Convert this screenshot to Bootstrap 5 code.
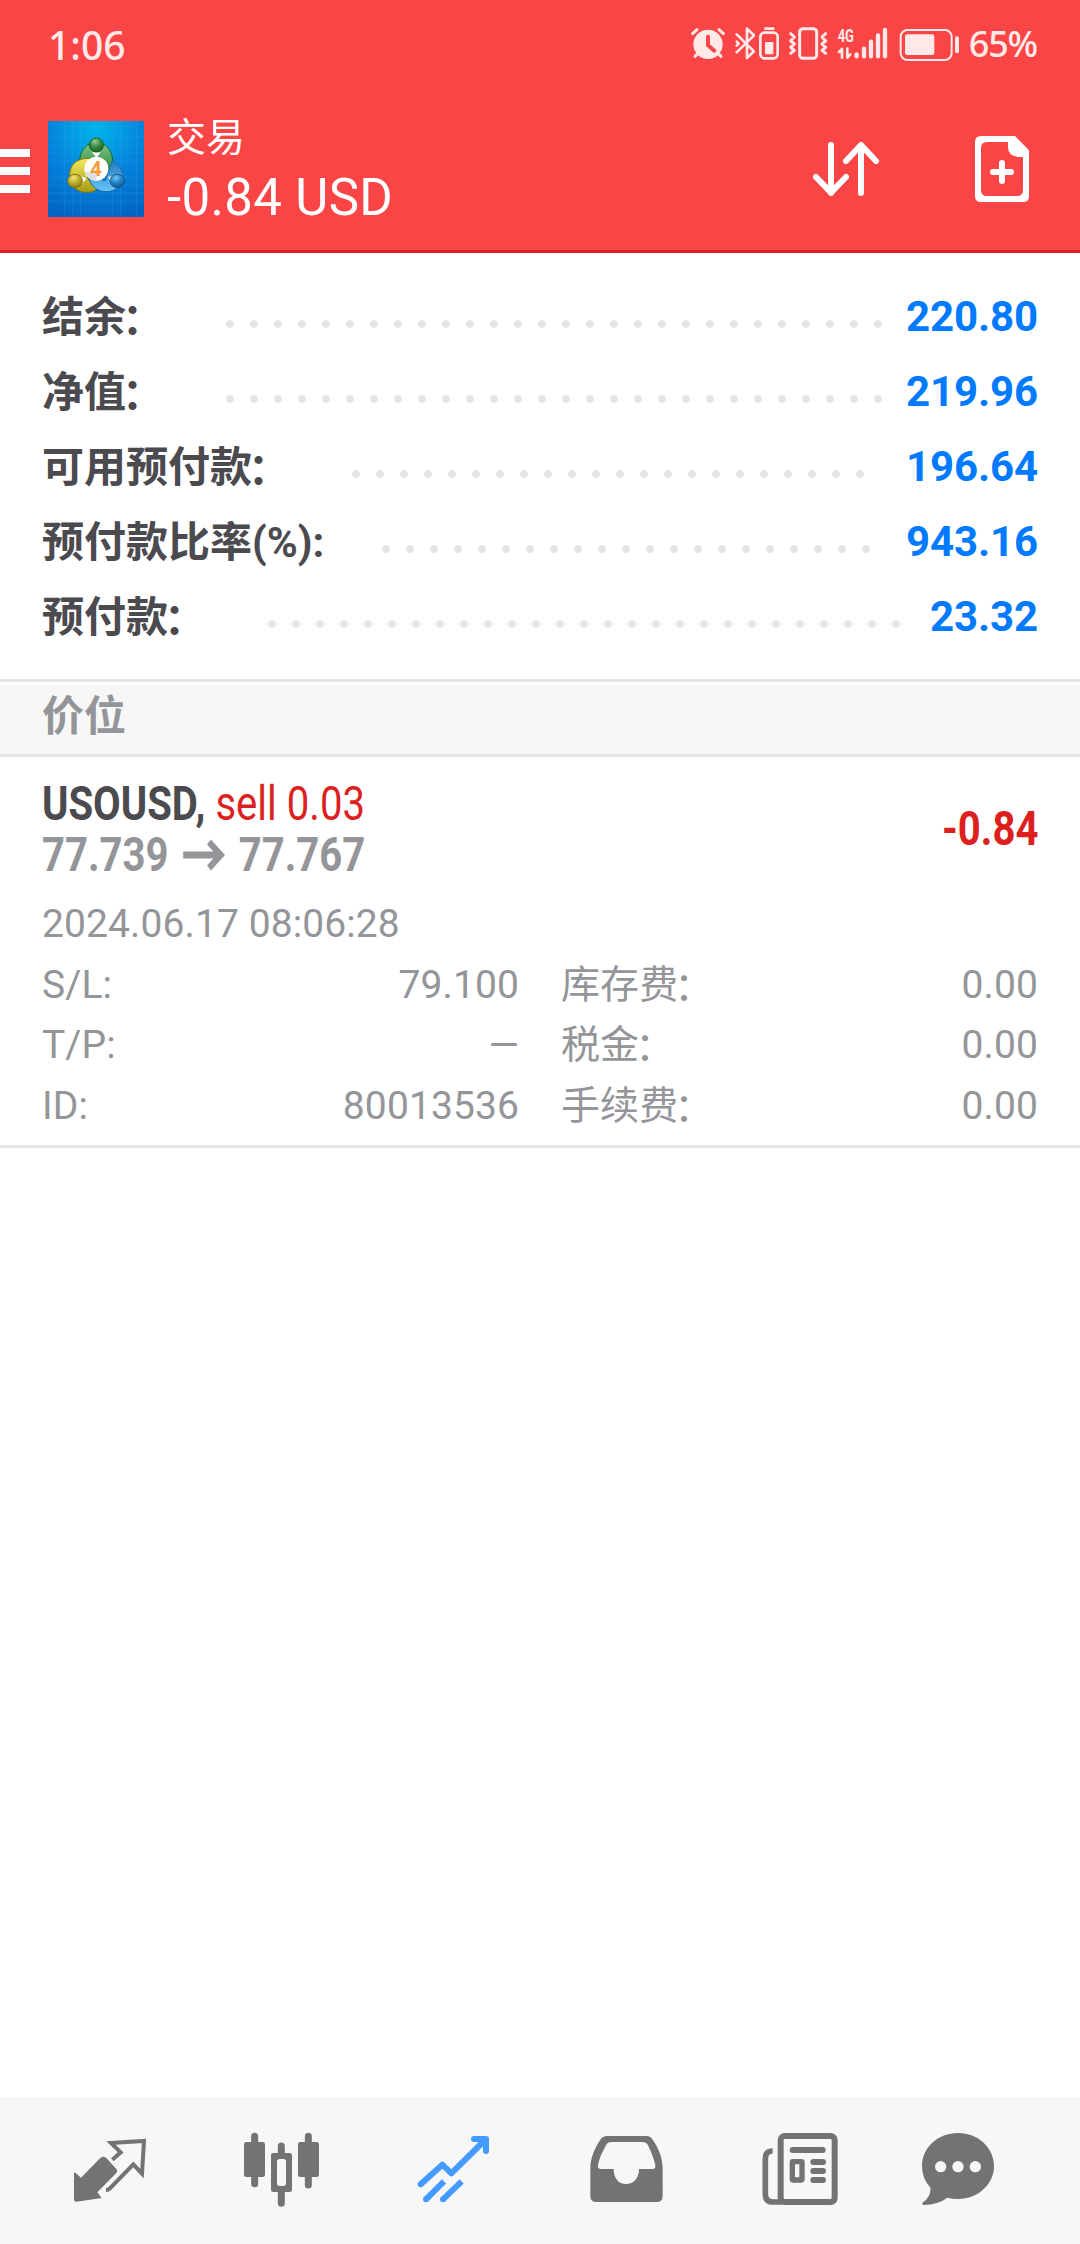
<!DOCTYPE html>
<html lang="zh-CN">
<head>
<meta charset="utf-8">
<meta name="viewport" content="width=device-width, initial-scale=1">
<title>交易</title>
<link rel="stylesheet" href="https://cdn.jsdelivr.net/npm/bootstrap@5.3.0/dist/css/bootstrap.min.css">
<style>
body{font-family:Roboto,"Noto Sans CJK SC",sans-serif;color:#4a4a4f;background:#fff;overflow:hidden}
svg{display:block;flex:none}
.screen{height:2244px}
.top-area{background:#f94545;border-bottom:3px solid #d32023;color:#fff}
.status-row{height:88px;padding:0 43px 0 48px;font-family:"Noto Sans",sans-serif;font-weight:500;color:#ffe9e9}
.clock{font-size:39px;line-height:1}
.percent{font-size:36px;line-height:1;letter-spacing:-1.2px}
.app-row{height:162px}
.menu-bars{display:grid;gap:10px;width:30px;margin:4px 18px 0 0}
.menu-bars span{display:block;height:8px;background:#fff}
.titles{margin-left:23px}
.app-title{font-size:39px;line-height:57px}
.app-sum{font-size:51px;line-height:61px;letter-spacing:.35px}
.actions{gap:90px;padding-right:48px}
.summary{padding:26px 42px 25px;border-bottom:3px solid #e5e5e5}
.sum-row{height:75px;font-size:42px;font-weight:700;line-height:75px}
.sum-row .lbl{margin-top:2px}
.sum-row .val{color:#007aff;letter-spacing:-.1px}
.colon{margin:0 4px 0 -4px;line-height:1;vertical-align:-2px}
.leader{height:8px;margin:15px 0 0 50px;width:calc(var(--n)*24px);background:radial-gradient(circle at center,#e5e5e5 3.6px,transparent 4.3px) 0 0/24px 8px repeat-x}
.section-title{margin-top:3px;height:72px;background:#f7f7f7;border-bottom:3px solid #e5e5e5;color:#949599;font-size:42px;font-weight:700;line-height:64px;padding-left:42px}
.position{padding:21px 42px 8px;border-bottom:3px solid #e5e5e5;color:#949599}
.narrow{font-size:48px;line-height:51px;white-space:nowrap;transform:scaleX(.835);transform-origin:0 50%}
.narrow-end{transform-origin:100% 50%;margin-top:-2px}
.price-arrow{margin:0 16px 0 17px}
.ink{color:#4a4a4f}
.loss{color:#dc1f1f}
.details{margin-top:14px;font-size:39px;line-height:60.7px;letter-spacing:.1px}
.details .pair{width:477px}
.tabs{height:147px;background:#f7f7f7;padding-left:25px;color:#737373}
</style>
</head>
<body>
<div class="screen d-flex flex-column">
<header class="top-area">
  <div class="status-row d-flex align-items-center justify-content-between">
    <div class="clock">1:06</div>
    <div class="d-flex align-items-center">
      <svg width="275" height="40" viewBox="30 68 825 120" fill="none" stroke="#ffe9e9" stroke-width="8" stroke-linecap="round" stroke-linejoin="round">
        <g><circle cx="84" cy="129" r="44" fill="#ffe9e9" stroke="none"/><path d="M38 97l13-12M130 97l-13-12M54 156l-9 9M114 156l9 9" stroke-width="9"/><path d="M84 106v26l19 16" stroke="#f94545" stroke-width="12"/></g>
        <path d="M170 99l52 51-21 20V82l21 20-52 51M170 121l6 6-6 6"/>
        <path d="M256 82h24" stroke-width="8"/><rect x="241" y="94" width="52" height="77" rx="12"/><rect x="255" y="122" width="25" height="37" rx="3" fill="#ffe9e9" stroke="none"/>
        <rect x="359" y="82" width="51" height="89" rx="10" stroke-width="9"/>
        <path d="M332 97l11 10-11 12 11 9-11 10 11 9-11 9M437 97l-11 10 11 12-11 9 11 10-11 9 11 9" stroke-width="9"/>
        <text x="473" y="121" font-family="Roboto,sans-serif" font-weight="700" font-size="54" textLength="49" lengthAdjust="spacingAndGlyphs" fill="#ffe9e9" stroke="none">4G</text>
        <path d="M477 152l9-9v26M502 142v27l9-10" stroke-width="8"/>
        <path d="M530 159v6M552 142v23M573 121v44M594 102v63M615 86v79" stroke-width="13"/>
        <rect x="662" y="86" width="153" height="90" rx="20" stroke-width="6"/><rect x="675" y="99" width="88" height="62" rx="7" fill="#ffe9e9" stroke="none"/><path d="M831 111v39" stroke-width="12"/>
      </svg>
      <div class="percent ms-1">65%</div>
    </div>
  </div>
  <div class="app-row d-flex align-items-center">
    <div class="menu-bars"><span></span><span></span><span></span></div>
    <svg width="96" height="96" viewBox="24 33 288 288">
      <defs>
        <radialGradient id="sky" cx=".5" cy=".08" r="1"><stop offset="0" stop-color="#00b4ea"/><stop offset=".5" stop-color="#0583dc"/><stop offset="1" stop-color="#0263c4"/></radialGradient>
        <linearGradient id="gr" x1="0" y1="0" x2="0" y2="1"><stop offset="0" stop-color="#7cc48a"/><stop offset="1" stop-color="#23852d"/></linearGradient>
        <linearGradient id="ye" x1="0" y1="0" x2="0" y2="1"><stop offset="0" stop-color="#f2e85e"/><stop offset="1" stop-color="#a99b12"/></linearGradient>
        <linearGradient id="bl" x1="0" y1="0" x2="0" y2="1"><stop offset="0" stop-color="#2278bd"/><stop offset="1" stop-color="#68c6f6"/></linearGradient>
        <radialGradient id="gb" cx=".4" cy=".25" r=".8"><stop offset="0" stop-color="#8fd08f"/><stop offset=".5" stop-color="#3a8b42"/><stop offset="1" stop-color="#14601f"/></radialGradient>
        <radialGradient id="yb" cx=".4" cy=".25" r=".8"><stop offset="0" stop-color="#efe77a"/><stop offset=".5" stop-color="#bdae27"/><stop offset="1" stop-color="#83780e"/></radialGradient>
        <radialGradient id="bb" cx=".4" cy=".25" r=".8"><stop offset="0" stop-color="#73c4f2"/><stop offset=".5" stop-color="#2583c5"/><stop offset="1" stop-color="#0a5590"/></radialGradient>
      </defs>
      <rect x="24" y="33" width="288" height="288" fill="url(#sky)"/>
      <path d="M24 81h288M24 129h288M24 155h288M24 202h288M24 226h288M24 274h288M73 33v288M97 33v288M121 33v288M217 33v288M242 33v288M290 33v288M24 249h288M24 106h288" stroke="#43baf0" stroke-opacity=".3" stroke-width="2"/>
      <g stroke-width="3">
        <path d="M119 154c0-35 24-57 50-57s48 23 49 55c0 22-7 40-22 47l-22-60-50 20z" fill="url(#gr)" stroke="#176b2a"/>
        <path d="M149 145c-36-1-60 17-60 50 0 32 20 52 51 52 16 0 28-6 35-12l-33-30z" fill="url(#ye)" stroke="#81770e"/>
        <path d="M217 151c17 11 31 26 31 47 0 28-20 47-49 47-30 0-49-20-53-44l50 11z" fill="url(#bl)" stroke="#1e68ae"/>
        <path d="M156 127h26l-12 17zM118 198l22 6-16 20zM204 200l22-1-10 25z" fill="#fff" stroke="none"/>
        <circle cx="169" cy="105" r="21" fill="url(#gb)" stroke="#205e27"/>
        <ellipse cx="105" cy="213" rx="22" ry="20" fill="url(#yb)" stroke="#817710"/>
        <ellipse cx="232" cy="213" rx="22" ry="20" fill="url(#bb)" stroke="#12598f"/>
      </g>
      <circle cx="169" cy="176" r="36" fill="#fff"/><path d="M134 186h36v25c-20 0-33-10-36-25z" fill="#dfdfe3"/>
      <text x="168" y="197" text-anchor="middle" font-family="Roboto,sans-serif" font-size="62" font-weight="700" fill="#f79a38">4</text>
    </svg>
    <div class="titles">
      <div class="app-title">交易</div>
      <div class="app-sum">-0.84 USD</div>
    </div>
    <div class="actions ms-auto d-flex align-items-center">
      <svg width="72" height="60" viewBox="390 417 216 180" fill="none" stroke="#fff" stroke-width="18" stroke-linecap="round" stroke-linejoin="round"><path d="M453 435v144M408 531l45 47 45-47M543 579V436M498 483l45-48 45 48"/></svg>
      <svg width="60" height="66" viewBox="876 408 180 198"><path fill="#fff" fill-rule="evenodd" d="M903 408h102l42 43v137q0 18-18 18H903q-18 0-18-18V426q0-18 18-18zm18 18q-18 0-18 18v126q0 18 18 18h90q18 0 18-18V471h-16q-29-4-29-29v-16z"/><path d="M966 489v54M939 516h54" stroke="#fff" stroke-width="18" stroke-linecap="round"/></svg>
    </div>
  </div>
</header>

<main class="flex-grow-1">
  <section class="summary">
    <div class="sum-row d-flex align-items-center"><span class="lbl">结余<span class="colon">：</span></span><i class="leader" style="--n:28"></i><span class="val ms-auto">220.80</span></div>
    <div class="sum-row d-flex align-items-center"><span class="lbl">净值<span class="colon">：</span></span><i class="leader" style="--n:28"></i><span class="val ms-auto">219.96</span></div>
    <div class="sum-row d-flex align-items-center"><span class="lbl">可用预付款<span class="colon">：</span></span><i class="leader" style="--n:22"></i><span class="val ms-auto">196.64</span></div>
    <div class="sum-row d-flex align-items-center"><span class="lbl">预付款比率(%):</span><i class="leader" style="--n:21"></i><span class="val ms-auto">943.16</span></div>
    <div class="sum-row d-flex align-items-center"><span class="lbl">预付款<span class="colon">：</span></span><i class="leader" style="--n:27"></i><span class="val ms-auto">23.32</span></div>
  </section>
  <div class="section-title">价位</div>
  <section class="position">
    <div class="d-flex align-items-center justify-content-between">
      <div>
        <div class="narrow"><b class="ink">USOUSD,</b> <span class="loss">sell 0.03</span></div>
        <div class="narrow fw-bold d-flex align-items-center">77.739<svg class="price-arrow" width="51" height="32" viewBox="0 0 51 32" fill="none" stroke="#949599" stroke-width="7"><path d="M0 16h44"/><path d="M31 3l14 13-14 13"/></svg>77.767</div>
      </div>
      <div class="narrow narrow-end fw-bold loss">-0.84</div>
    </div>
    <div class="details">
      <div>2024.06.17 08:06:28</div>
      <div class="d-flex justify-content-between"><div class="pair d-flex justify-content-between"><span>S/L:</span><span>79.100</span></div><div class="pair d-flex justify-content-between"><span>库存费<span class="colon">：</span></span><span>0.00</span></div></div>
      <div class="d-flex justify-content-between"><div class="pair d-flex justify-content-between"><span>T/P:</span><span>—</span></div><div class="pair d-flex justify-content-between"><span>税金<span class="colon">：</span></span><span>0.00</span></div></div>
      <div class="d-flex justify-content-between"><div class="pair d-flex justify-content-between"><span>ID:</span><span>80013536</span></div><div class="pair d-flex justify-content-between"><span>手续费<span class="colon">：</span></span><span>0.00</span></div></div>
    </div>
  </section>
</main>

<nav class="tabs d-flex">
  <svg width="172" height="147" viewBox="-45 21 516 441" fill="#737373"><path d="M102 249q2-3 5 0l16 14 58-59q9-7 18 0l31 34q4 6-1 11l-57 58 13 17-76 11q-7 0-7-8z"/><path d="M217 209l25-22-29-28 99-6-6 98-26-28-71 73q-4 4-11 4" fill="none" stroke="#737373" stroke-width="12"/></svg>
  <svg width="172" height="147" viewBox="471 21 516 441" fill="#737373"><rect x="612" y="156" width="63" height="105" rx="7"/><rect x="774" y="156" width="63" height="105" rx="7"/><path d="M644 139v142M805 139v146M724 168v24M724 304v36" stroke="#737373" stroke-width="21" stroke-linecap="round"/><path fill-rule="evenodd" d="M700 189h49q7 0 7 7v103q0 7-7 7h-49q-7 0-7-7V196q0-7 7-7zm19 18q-8 0-8 8v65q0 8 8 8h11q8 0 8-8v-65q0-8-8-8z"/></svg>
  <svg width="172" height="147" viewBox="-33 21 516 441" fill="none" stroke="#439bff" stroke-width="18" stroke-linejoin="round"><path d="M122 283l65-59 27 26 98-97M282 147h36v36" stroke-linecap="round"/><path d="M138 328l54-54M189 328l56-54"/><g fill="#439bff" stroke="none"><circle cx="138" cy="328" r="9"/><circle cx="189" cy="328" r="9"/></g></svg>
  <svg width="172" height="147" viewBox="483 21 516 441" fill="#737373"><path fill-rule="evenodd" d="M681 138h118q11 0 18 10c20 28 31 58 31 88v82q0 18-18 18H649q-18 0-18-18v-82c0-30 12-60 31-88q8-10 19-10zm14 18q-12 0-17 10c-12 22-20 38-24 59q-2 12 9 12h38c0 27 15 45 37 45 23 0 39-18 39-45h40q11 0 9-11c-5-21-12-40-22-60q-5-10-18-10z"/></svg>
  <svg width="172" height="147" viewBox="-21 21 516 441" fill="none" stroke="#737373" stroke-width="18"><rect x="182" y="138" width="162" height="198" rx="12"/><path d="M158 183q-22 0-22 24v105q0 24 22 24h30" stroke-width="17"/><path d="M218 180h90M280 216h29M280 243h29M280 270h29" stroke-linecap="round"/><rect x="217" y="215" width="29" height="55" rx="2" stroke-width="16"/></svg>
  <svg width="172" height="147" viewBox="495 21 516 441" fill="#737373"><path d="M714 129c60 0 108 44 108 99s-48 99-108 99q-17 0-32-4-28 21-71 22-8-2-2-8 22-14 23-43-26-28-26-66c0-55 48-99 108-99z"/><g fill="#f7f7f7"><circle cx="662" cy="230" r="17"/><circle cx="714" cy="230" r="17"/><circle cx="766" cy="230" r="17"/></g></svg>
</nav>
</div>
<script src="https://cdn.jsdelivr.net/npm/bootstrap@5.3.0/dist/js/bootstrap.bundle.min.js"></script>
</body>
</html>
